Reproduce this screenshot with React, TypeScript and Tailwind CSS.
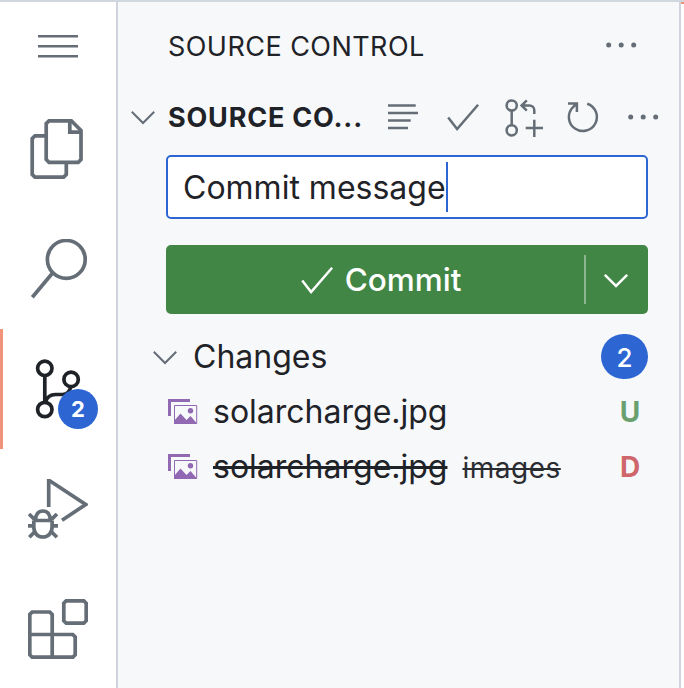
import type { ReactNode } from "react";
import { clsx } from "clsx";

const changes = [
  { name: "solarcharge.jpg", folder: "", status: "U" },
  { name: "solarcharge.jpg", folder: "images", status: "D" },
];

function Icon({ size = 40, children, className }: { size?: number; children: ReactNode; className?: string }) {
  return (
    <svg
      width={size}
      height={size}
      viewBox={`0 0 ${size} ${size}`}
      fill="none"
      stroke="currentColor"
      strokeWidth={size === 60 ? 3.7 : 2.5}
      className={clsx("block shrink-0", className)}
    >
      {children}
    </svg>
  );
}

function FilesIcon() {
  return (
    <Icon size={60}>
      <path d="M21 1.8h22.3L53 11.5v29l-2.8 2.8H21l-2.8-2.8V4.6z" />
      <path d="M41.8 2v11.2H53" />
      <path d="M17 16.8H7l-2.8 2.8v35.8L7 58.2h28.5l2.8-2.8V44" />
    </Icon>
  );
}

function SearchIcon() {
  return (
    <Icon size={60}>
      <circle cx="38.3" cy="20.4" r="18.9" />
      <path d="M24.8 33.8 4.3 58.3" />
    </Icon>
  );
}

function BranchIcon() {
  return (
    <Icon size={60}>
      <circle cx="16.8" cy="9.3" r="7.2" />
      <circle cx="43.1" cy="20.4" r="7.2" />
      <circle cx="16.8" cy="50.5" r="7.2" />
      <path d="M16.8 16.5v27M17.5 43c1.5-5 5-7.500 10-7.500h7c4 0 7-3 8.400-7.500" />
    </Icon>
  );
}

function DebugIcon() {
  return (
    <Icon size={60}>
      <path d="M20.7 28V1.8h1L57.7 25.5 34 41.3" />
      <path d="M6 41.500h18M5.800 41.500V48c0 5.800 3.600 10 9 10s9.300-4.200 9.300-10v-6.500M7.500 41.500C7.500 35.500 10.300 32 14.900 32s7.400 3.500 7.400 9.500" />
      <path d="M0 46.800h6M24 46.800h6M1 35l5.500 5.300M29 35l-5.500 5.300M1.300 58.300l6-6M28.900 58.300l-6-6" />
    </Icon>
  );
}

function ExtensionsIcon() {
  return (
    <Icon size={60}>
      <path d="M38.200 1.800h17.600l2.400 2.400v17.600l-2.400 2.400H38.200l-2.400-2.400V4.200z" />
      <path d="M4.200 13h17.600l2.400 2.400v20.100h20.600l2.400 2.400v17.900l-2.400 2.400H4.200l-2.400-2.400V15.400zM1.800 35.500h22.400v22.700" />
    </Icon>
  );
}

function CheckIcon() {
  return (
    <Icon>
      <path d="M5.200 20.500l8.900 11.500L35.100 7.800" />
    </Icon>
  );
}

function ChevronIcon({ className }: { className?: string }) {
  return (
    <Icon size={24} className={className}>
      <path d="M.8 6.800 12 18 23.200 6.800" />
    </Icon>
  );
}

function MoreIcon() {
  return (
    <Icon>
      <g fill="currentColor" stroke="none">
        <circle cx="7.700" cy="20" r="2.500" />
        <circle cx="20.200" cy="20" r="2.500" />
        <circle cx="32.700" cy="20" r="2.500" />
      </g>
    </Icon>
  );
}

function TreeViewIcon() {
  return (
    <Icon>
      <path d="M5 8.600h27.700M5 16.100h30M5 23.600h22.700M5 31.100h20" />
    </Icon>
  );
}

function PullRequestIcon() {
  return (
    <Icon>
      <circle cx="8.700" cy="8.500" r="5.100" />
      <circle cx="8.700" cy="33.300" r="5.100" />
      <path d="M8.700 13.600v14.600M18.800 8.500h7.500c3 0 5 2 5 5v3.600M23.800 3.400l-5.200 5.100 5.200 5.100M31.300 22.700v17.300M22.700 31.100H40" />
    </Icon>
  );
}

function RefreshIcon() {
  return (
    <Icon>
      <path d="M24.200 6.700A14 14 0 1 1 9.600 10.500L13.700 6.500M5 6.500h8.900V15" />
    </Icon>
  );
}

function ImageIcon() {
  return (
    <svg width="30" height="26" viewBox="0 0 30 26" className="block shrink-0 text-[#9069b2]">
      <path d="M0 0h22v3H3v14H0z" fill="currentColor" />
      <path d="M6.500 6.500h22.200v18H6.500z" fill="none" stroke="currentColor" />
      <path d="M6 25v-3l6.500-7.500 6 6.500 4-4 6 7v1z" fill="currentColor" />
      <circle cx="22.500" cy="11.800" r="2.700" fill="currentColor" />
    </svg>
  );
}

function ActivityItem({ active, badge, children }: { active?: boolean; badge?: number; children: ReactNode }) {
  return (
    <div
      className={clsx(
        "relative flex h-[120px] shrink-0 items-center justify-center border-l-[3px] pr-[3px]",
        active ? "border-[#f2937b] text-[#1f2328]" : "border-transparent text-[#656d76]",
      )}
    >
      {children}
      {badge ? (
        <span className="absolute top-[60px] left-[55px] flex size-10 items-center justify-center rounded-full bg-[#2d66d3] text-[22px] font-bold text-white">
          {badge}
        </span>
      ) : null}
    </div>
  );
}

function ActivityBar() {
  return (
    <nav className="flex w-[118px] shrink-0 flex-col border-r-2 border-[#d0d5dd] bg-white">
      <div className="flex h-[87px] shrink-0 items-center justify-center text-[#656d76]">
        <Icon>
          <path d="M0 10.300h40M0 20.300h40M0 30.300h40" />
        </Icon>
      </div>
      <ActivityItem>
        <FilesIcon />
      </ActivityItem>
      <ActivityItem>
        <SearchIcon />
      </ActivityItem>
      <ActivityItem active badge={2}>
        <BranchIcon />
      </ActivityItem>
      <ActivityItem>
        <DebugIcon />
      </ActivityItem>
      <ActivityItem>
        <ExtensionsIcon />
      </ActivityItem>
    </nav>
  );
}

export default function App() {
  return (
    <div className="flex h-[688px] w-[684px] overflow-hidden border-t-2 border-[#d0d7de] bg-white font-['Inter',sans-serif] text-[#1f2328]">
      <ActivityBar />
      <main className="flex w-[563px] shrink-0 flex-col border-r-2 border-[#d0d5dd] bg-[#f6f8fa]">
        <header className="flex h-[87px] shrink-0 items-center justify-between pr-[38px] pl-[50px]">
          <h2 className="pt-[3px] text-[27px] tracking-[0.45px] whitespace-nowrap">SOURCE CONTROL</h2>
          <span className="pb-px text-[#656d76]">
            <MoreIcon />
          </span>
        </header>

        <div className="flex h-[56px] shrink-0 items-center pr-4 pl-[13px] text-[#656d76]">
          <ChevronIcon className="stroke-2" />
          <h3 className="ml-[13px] w-[215px] pt-0.5 text-[27px] font-bold tracking-[0.8px] whitespace-nowrap text-[#1f2328]">
            SOURCE CO...
          </h3>
          <div className="flex gap-5">
            <TreeViewIcon />
            <CheckIcon />
            <PullRequestIcon />
            <RefreshIcon />
            <MoreIcon />
          </div>
        </div>

        <div className="mt-[10px] ml-12 flex h-16 w-[482px] shrink-0 items-center rounded-[5px] border-2 border-[#2d66d3] bg-white pl-[15px]">
          <span className="pt-0.5 text-[32px] whitespace-nowrap">Commit message</span>
          <span className="h-[50px] w-0.5 bg-[#2d66d3]" />
        </div>

        <div className="mt-[26px] ml-12 flex h-[69px] w-[482px] shrink-0 items-center rounded-[5px] bg-[#428646] text-white">
          <div className="flex w-[418px] items-center justify-center gap-2 pl-2">
            <CheckIcon />
            <span className="text-[31.5px] font-medium">Commit</span>
          </div>
          <span className="h-[49px] w-0.5 bg-white/40" />
          <div className="flex flex-1 justify-center pr-0.5">
            <ChevronIcon />
          </div>
        </div>

        <div className="mt-[15px] flex h-[55px] shrink-0 items-center pr-[31px] pl-[35px]">
          <span className="text-[#656d76]">
            <ChevronIcon className="stroke-2" />
          </span>
          <span className="ml-4 flex-1 pt-px text-[32px]">Changes</span>
          <span className="flex h-[45px] w-[47px] items-center justify-center rounded-full bg-[#2d66d3] pt-px text-[26px] font-medium text-white">
            2
          </span>
        </div>

        {changes.map((change) => (
          <div key={change.status} className="flex h-[55px] shrink-0 items-center pr-[31px] pl-[50px]">
            <ImageIcon />
            <div className="ml-[15px] flex flex-1 items-baseline">
              <span className={clsx("text-[32px]", change.status === "D" && "line-through decoration-[3px]")}>
                {change.name}
              </span>
              {change.folder ? (
                <span className="ml-[15px] text-[28px] tracking-[0.5px] line-through decoration-2 opacity-95">
                  {change.folder}
                </span>
              ) : null}
            </div>
            <span
              className={clsx(
                "w-9 text-center text-[28px] font-bold",
                change.status === "U" ? "text-[#6a9f6e]" : "text-[#cf666b]",
              )}
            >
              {change.status}
            </span>
          </div>
        ))}
      </main>
      <div className="flex-1 border-t-2 border-[#f2937b] bg-white" />
    </div>
  );
}
